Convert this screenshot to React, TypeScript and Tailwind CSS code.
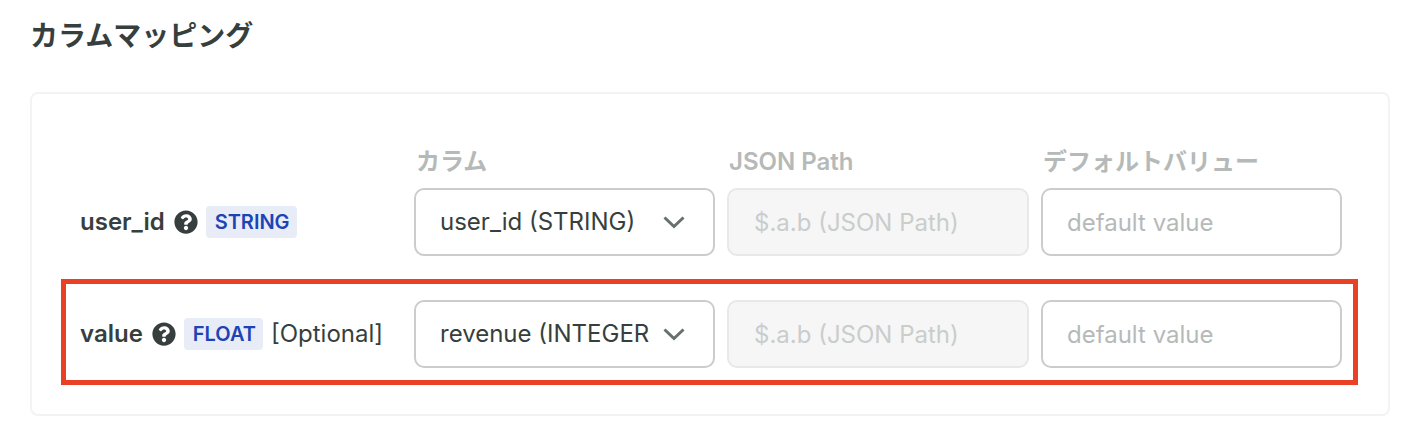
import { FaQuestionCircle } from "react-icons/fa";

const font = { fontFamily: '"Inter", "Noto Sans CJK JP", sans-serif' };

function FieldRow(props: { name: string; type: string; optional?: boolean; column: string }) {
  const { name, type, optional, column } = props;
  return (
    <div className="flex items-center h-[68px]">
      <div className="w-[334px] flex items-center text-[24px] text-[#363f3e]">
        <span className="font-semibold">{name}</span>
        <FaQuestionCircle className="ml-[9px] w-[24px] h-[24px] text-[#363f3e]" />
        <span className="ml-[8px] h-[32px] pl-[9px] pr-[7px] flex items-center rounded-[4px] bg-[#e8ecf7] text-[#1d43b5] text-[20px] font-semibold">
          {type}
        </span>
        {optional && <span className="ml-[8px] -mt-[1px]">[Optional]</span>}
      </div>
      <div className="grid grid-cols-[301px_302px_301px] gap-x-[12px]">
        <div className="h-[68px] rounded-[10px] border-2 border-[#cccccc] bg-white flex items-center pl-[24px] pr-[28px] text-[24px] text-[#363f3e]">
          <span className="flex-1 overflow-hidden whitespace-nowrap">{column}</span>
          <svg className="ml-[14px] shrink-0" width="22" height="14" viewBox="0 0 22 14" fill="none">
            <path d="M1.5 2.5 L11 11.5 L20.5 2.5" stroke="#66706e" strokeWidth="3" />
          </svg>
        </div>
        <input
          disabled
          placeholder="$.a.b (JSON Path)"
          className="h-[68px] w-full rounded-[10px] border-2 border-[#e8e8e8] bg-[#f6f6f6] pl-[25px] text-[24px] placeholder:text-[#c9cdcc] outline-none"
        />
        <input
          placeholder="default value"
          className="h-[68px] w-full rounded-[10px] border-2 border-[#cccccc] bg-white pl-[24px] text-[24px] placeholder:text-[#b5bab8] outline-none"
        />
      </div>
    </div>
  );
}

export default function App() {
  return (
    <div className="w-[1410px] h-[440px] bg-white overflow-hidden px-[30px]" style={font}>
      <h2 className="h-[92px] pt-[18px] text-[28px] leading-[36px] font-bold text-[#363f3e]">カラムマッピング</h2>
      <div className="relative w-[1360px] h-[324px] rounded-[8px] border-2 border-[#f2f3f3] pl-[48px] pt-[52px]">
        <div className="ml-[334px] grid grid-cols-[301px_302px_301px] gap-x-[12px] h-[42px] text-[24px] leading-[32px] font-semibold text-[#b5bab8]">
          <span className="pl-[2px]">カラム</span>
          <span className="pl-[2px]">JSON Path</span>
          <span className="pl-[2px]">デフォルトバリュー</span>
        </div>
        <div className="flex flex-col gap-y-[44px]">
          <FieldRow name="user_id" type="STRING" column="user_id (STRING)" />
          <FieldRow name="value" type="FLOAT" optional column="revenue (INTEGER)" />
        </div>
        <div className="absolute left-[29px] top-[185px] w-[1297px] h-[106px] border-[5px] border-[#ea4126]" />
      </div>
    </div>
  );
}
